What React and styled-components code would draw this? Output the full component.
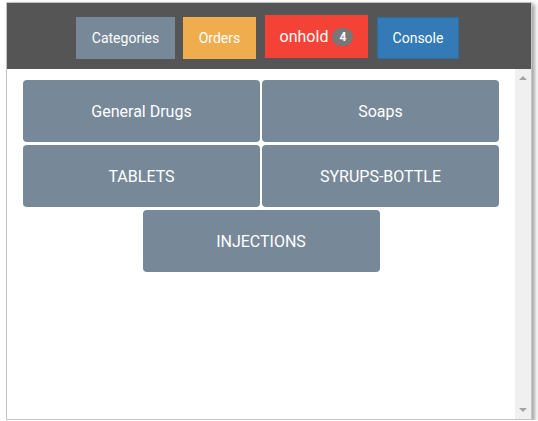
import React from "react";
import styled, { createGlobalStyle } from "styled-components";

const GlobalStyle = createGlobalStyle`
  html, body {
    margin: 0;
    background: #ffffff;
    font-family: Roboto, "Liberation Sans", sans-serif;
  }
`;

const categories = ["General Drugs", "Soaps", "TABLETS", "SYRUPS-BOTTLE", "INJECTIONS"];

const variants = {
  slate: { bg: "#778899", border: "#778899", size: "14px", width: "99px" },
  orange: { bg: "#f0ad4e", border: "#f0ad4e", size: "14px", width: "73px" },
  red: { bg: "#f44336", border: "#f44336", size: "16px", width: "103px", margin: "-2px 1px 0" },
  blue: { bg: "#337ab7", border: "#2e6da4", size: "14px", width: "82px" },
};

const Frame = styled.div`
  box-sizing: border-box;
  margin: 2px 0 0 6px;
  width: 526px;
  height: 418px;
  border: 1px solid #c4c4c4;
  box-shadow: 3px 2px 4px rgba(0, 0, 0, 0.35);
  display: flex;
  flex-direction: column;
  background: #fff;
`;

const Toolbar = styled.div`
  height: 66px;
  flex-shrink: 0;
  background: #555555;
  display: flex;
  justify-content: center;
  align-items: flex-start;
  gap: 8px;
  padding: 14px 3px 0 0;
  box-sizing: border-box;
`;

const ToolButton = styled.button`
  box-sizing: border-box;
  width: ${(p) => variants[p.$variant].width};
  height: ${(p) => (p.$variant === "red" ? "43px" : "42px")};
  margin: ${(p) => variants[p.$variant].margin || "0"};
  padding: 0;
  background: ${(p) => variants[p.$variant].bg};
  border: 1px solid ${(p) => variants[p.$variant].border};
  border-radius: 0;
  color: #fff;
  font-family: Roboto, "Liberation Sans", sans-serif;
  font-size: ${(p) => variants[p.$variant].size};
  display: flex;
  align-items: center;
  justify-content: center;
  gap: 4px;
  cursor: pointer;
`;

const Badge = styled.span`
  display: inline-flex;
  align-items: center;
  justify-content: center;
  min-width: 21px;
  height: 18px;
  border-radius: 9px;
  background: #777777;
  color: #fff;
  font-size: 12px;
  font-weight: 700;
  box-sizing: border-box;
`;

const Body = styled.div`
  flex: 1;
  display: flex;
  min-height: 0;
`;

const Grid = styled.div`
  flex: 1;
  display: flex;
  flex-wrap: wrap;
  justify-content: center;
  align-content: flex-start;
  gap: 3px 2px;
  padding-top: 11px;
`;

const Tile = styled.div`
  width: 237px;
  height: 62px;
  background: #778899;
  border-radius: 4px;
  color: #fff;
  font-size: 16px;
  display: flex;
  align-items: center;
  justify-content: center;
  cursor: pointer;
`;

const Scrollbar = styled.div`
  width: 16px;
  background: #f0f0f0;
  display: flex;
  flex-direction: column;
  justify-content: space-between;
  align-items: center;
  padding: 7px 0 7px;
  box-sizing: border-box;
`;

const Arrow = styled.div`
  width: 0;
  height: 0;
  border-left: 4px solid transparent;
  border-right: 4px solid transparent;
  ${(p) =>
    p.$up ? "border-bottom: 4px solid #a3a3a3;" : "border-top: 4px solid #a3a3a3;"}
`;

export default function App() {
  return (
    <>
      <GlobalStyle />
      <Frame>
        <Toolbar>
          <ToolButton $variant="slate">Categories</ToolButton>
          <ToolButton $variant="orange">Orders</ToolButton>
          <ToolButton $variant="red">
            onhold <Badge>4</Badge>
          </ToolButton>
          <ToolButton $variant="blue">Console</ToolButton>
        </Toolbar>
        <Body>
          <Grid>
            {categories.map((c) => (
              <Tile key={c}>{c}</Tile>
            ))}
          </Grid>
          <Scrollbar>
            <Arrow $up />
            <Arrow />
          </Scrollbar>
        </Body>
      </Frame>
    </>
  );
}
